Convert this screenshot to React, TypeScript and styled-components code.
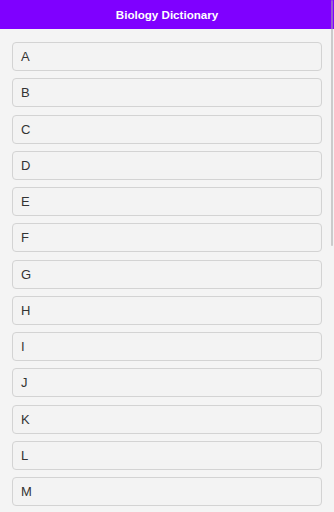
import React from "react";
import styled, { createGlobalStyle } from "styled-components";

const letters = "ABCDEFGHIJKLMNOPQRSTUVWXYZ".split("");

const GlobalStyle = createGlobalStyle`
  html, body {
    margin: 0;
    padding: 0;
    overflow: hidden;
    background: #f4f4f4;
    font-family: "Liberation Sans", Arial, sans-serif;
  }
`;

const App: React.FC = () => {
  return (
    <Page>
      <GlobalStyle />
      <Header>Biology Dictionary</Header>
      <List>
        {letters.map((letter) => (
          <Item key={letter}>{letter}</Item>
        ))}
      </List>
      <ScrollThumb />
    </Page>
  );
};

export default App;

const Page = styled.div`
  position: relative;
  display: flex;
  flex-direction: column;
  height: 100vh;
  overflow: hidden;
  background: #f4f4f4;
`;

const Header = styled.div`
  flex: 0 0 29px;
  display: flex;
  align-items: center;
  justify-content: center;
  background: #7f00ff;
  color: #ffffff;
  font-size: 11.6px;
  font-weight: 700;
`;

const List = styled.div`
  flex: 1;
  display: flex;
  flex-direction: column;
  gap: 7.25px;
  padding: 13px 12px;
  overflow: hidden;
`;

const Item = styled.div`
  flex: 0 0 auto;
  box-sizing: border-box;
  width: 310px;
  height: 29px;
  display: flex;
  align-items: center;
  padding-left: 8px;
  background: #f3f3f3;
  border: 1px solid #d3d3d3;
  border-radius: 4px;
  color: #333333;
  font-size: 13px;
  cursor: pointer;
`;

const ScrollThumb = styled.div`
  position: absolute;
  top: 0;
  right: 1px;
  width: 2px;
  height: 246px;
  border-radius: 1px;
  background: rgba(170, 170, 170, 0.55);
`;
